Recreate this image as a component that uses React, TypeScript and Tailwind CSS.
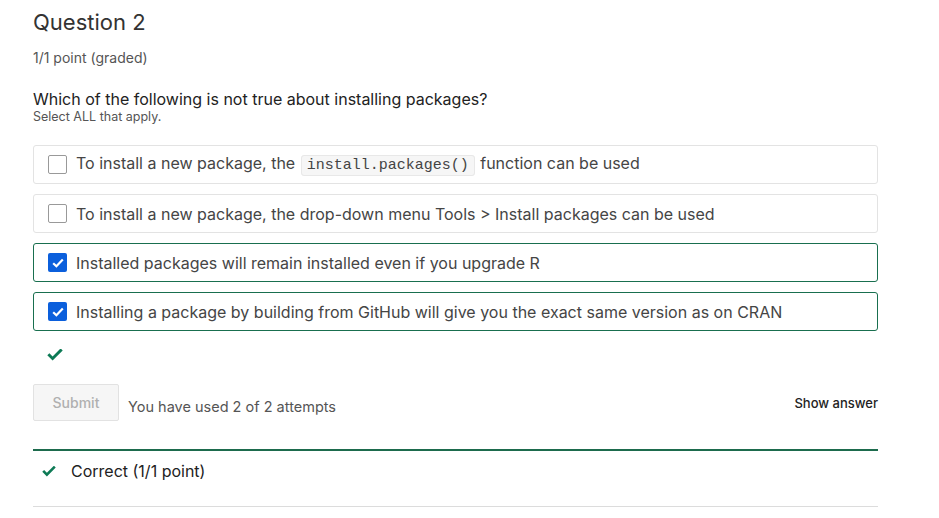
import React from "react";

type Option = { id: string; checked: boolean; content: React.ReactNode };

const options: Option[] = [
  {
    id: "o1",
    checked: false,
    content: (
      <>
        To install a new package, the{" "}
        <code className="mx-[1px] rounded-[3px] border border-[#e8e8e8] bg-[#f6f6f6] px-[5px] py-[1px] font-['Liberation_Mono',monospace] text-[15px] text-[#444]">
          install.packages()
        </code>{" "}
        function can be used
      </>
    ),
  },
  {
    id: "o2",
    checked: false,
    content: "To install a new package, the drop-down menu Tools > Install packages can be used",
  },
  { id: "o3", checked: true, content: "Installed packages will remain installed even if you upgrade R" },
  {
    id: "o4",
    checked: true,
    content: "Installing a package by building from GitHub will give you the exact same version as on CRAN",
  },
];

function Tick({ className }: { className?: string }) {
  return (
    <svg viewBox="0 0 16 12" className={className} fill="currentColor">
      <path d="M5.6 11.6 0.3 6.3 2.4 4.2 5.6 7.4 13.6 -0.6 15.7 1.5Z" />
    </svg>
  );
}

function Checkbox({ checked }: { checked: boolean }) {
  if (!checked) {
    return <span className="h-[19px] w-[19px] shrink-0 rounded-[2px] border border-[#999] bg-white" />;
  }
  return (
    <span className="flex h-[19px] w-[19px] shrink-0 items-center justify-center rounded-[2px] bg-[#0b5fdc]">
      <svg viewBox="0 0 12 10" className="h-[10px] w-[12px]" fill="none" stroke="white" strokeWidth="2.2">
        <path d="M1.2 5.2 4.4 8.2 10.8 1.6" />
      </svg>
    </span>
  );
}

export default function App() {
  return (
    <div className="min-h-[518px] bg-white font-['Inter','Liberation_Sans',sans-serif]">
      <div className="w-[845px] pl-[33px] pt-[8px]" style={{ boxSizing: "content-box" }}>
        <h2 className="text-[22px] leading-[28px] text-[#333]">Question 2</h2>
        <p className="mt-[14px] text-[14px] leading-[16px] text-[#555]">1/1 point (graded)</p>

        <p className="mt-[23px] text-[16px] leading-[20px] text-[#222]">
          Which of the following is not true about installing packages?
        </p>
        <p className="text-[12.5px] leading-[15px] text-[#555]">Select ALL that apply.</p>

        <div className="mt-[21px] flex flex-col gap-[10px]">
          {options.map((o) => (
            <label
              key={o.id}
              className={
                "flex h-[39px] items-center gap-[9px] rounded-[3px] border pl-[14px] " +
                (o.checked ? "border-[#196f4f]" : "border-[#e3e3e3]")
              }
            >
              <Checkbox checked={o.checked} />
              <span className="text-[16px] leading-[20px] text-[#454545]">{o.content}</span>
            </label>
          ))}
        </div>

        <div className="mt-[18px] pl-[14px]">
          <Tick className="h-[12px] w-[16px] text-[#0d7a55]" />
        </div>

        <div className="mt-[23px] flex items-center">
          <button
            disabled
            className="h-[37px] w-[86px] rounded-[2px] border border-[#e2e2e2] bg-[#f6f6f6] text-[14px] font-medium text-[#b0b0b0]"
          >
            Submit
          </button>
          <span className="ml-[9px] mt-[8px] text-[14.5px] text-[#555]">You have used 2 of 2 attempts</span>
          <span className="ml-auto mt-[2px] text-[13px] font-medium text-[#222]">Show answer</span>
        </div>

        <div className="mt-[28px] h-[2px] bg-[#1d6b4d]" />
        <div className="flex h-[40px] items-center gap-[15px] pl-[9px]">
          <Tick className="h-[11px] w-[14px] text-[#0d7a55]" />
          <span className="text-[16px] text-[#222]">Correct (1/1 point)</span>
        </div>
        <div className="mt-[15px] h-px bg-[#dcdcdc]" />
      </div>
    </div>
  );
}
